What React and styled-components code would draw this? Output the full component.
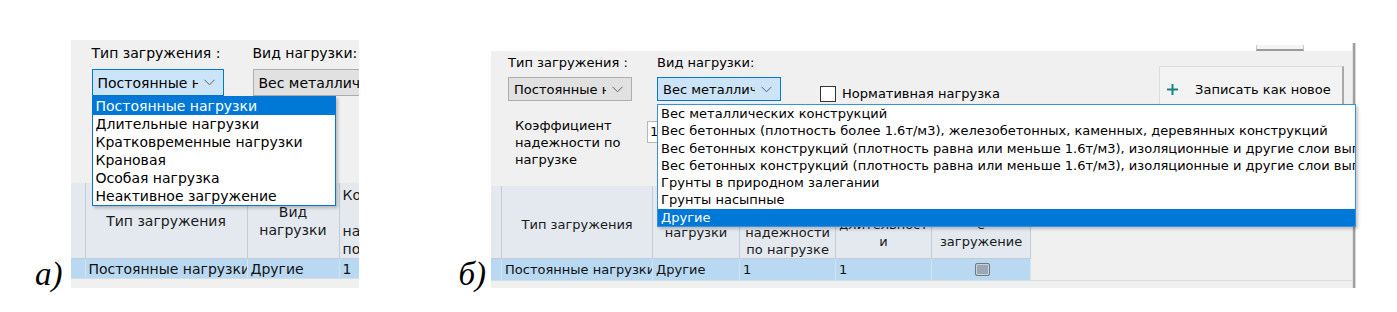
import React from "react";
import styled, { createGlobalStyle } from "styled-components";

const GlobalStyle = createGlobalStyle`
  html, body { margin: 0; padding: 0; background: #fff; }
  body { font-family: "DejaVu Sans", "Noto Sans", sans-serif; color: #000; }
  * { box-sizing: border-box; }
`;

const Page = styled.div`
  width: 1397px;
  height: 312px;
  display: flex;
  align-items: flex-end;
  padding: 0 0 24px 35px;
  gap: 100px;
  overflow: hidden;
  background: #fff;
`;

const Figure = styled.div`
  display: flex;
  align-items: flex-end;
  gap: ${(p) => p.$gap}px;
`;

const Caption = styled.div`
  font-family: "Liberation Serif", "Times New Roman", serif;
  font-style: italic;
  font-size: 33px;
  line-height: 1;
  margin-bottom: -3px;
`;

const Window = styled.div`
  position: relative;
  width: ${(p) => p.$w}px;
  height: ${(p) => p.$h}px;
  background: #f0f0f0;
  overflow: hidden;
  display: flex;
  flex-direction: column;
  font-size: ${(p) => p.$fs}px;
  line-height: ${(p) => p.$lh}px;
`;

const FormRow = styled.div`
  display: flex;
  align-items: flex-start;
  padding-top: ${(p) => p.$top}px;
`;

const Field = styled.div`
  display: flex;
  flex-direction: column;
  gap: ${(p) => p.$gap}px;
  margin-left: ${(p) => p.$ml}px;
  flex-shrink: 0;
`;

const Label = styled.div`
  white-space: nowrap;
`;

const Combo = styled.div`
  width: ${(p) => p.$w}px;
  height: ${(p) => p.$h}px;
  display: flex;
  align-items: center;
  justify-content: space-between;
  padding: 0 8px 0 5px;
  background: ${(p) => (p.$focus ? "#cce4f7" : "#e1e1e1")};
  border: 1px solid ${(p) => (p.$focus ? "#0078d7" : "#adadad")};
  white-space: nowrap;
  overflow: hidden;
  span {
    overflow: hidden;
  }
`;

const Chevron = () => (
  <svg width="11" height="7" viewBox="0 0 11 7" style={{ flexShrink: 0, marginLeft: 6 }}>
    <path d="M0.5 0.8 L5.5 5.8 L10.5 0.8" fill="none" stroke="#606060" strokeWidth="1" />
  </svg>
);

const DropList = styled.div`
  position: absolute;
  z-index: 5;
  left: ${(p) => p.$left}px;
  top: ${(p) => p.$top}px;
  width: ${(p) => (p.$w ? `${p.$w}px` : "auto")};
  right: ${(p) => (p.$w ? "auto" : "0")};
  font-size: ${(p) => p.$fs}px;
  background: #fff;
  border: 1px solid ${(p) => p.$border};
  box-shadow: 2px 2px 3px rgba(0, 0, 0, 0.22);
  overflow: hidden;
`;

const DropItem = styled.div`
  height: ${(p) => p.$h}px;
  line-height: ${(p) => p.$h}px;
  padding-left: 3px;
  white-space: nowrap;
  overflow: hidden;
  background: ${(p) => (p.$active ? "#0078d7" : "transparent")};
  color: ${(p) => (p.$active ? "#fff" : "#000")};
`;

const Table = styled.div`
  margin-top: auto;
  display: grid;
  grid-template-columns: ${(p) => p.$cols};
  grid-template-rows: ${(p) => p.$headH}px ${(p) => p.$rowH}px;
  margin-bottom: ${(p) => p.$mb}px;
  border-bottom: 1px solid #d6dde5;
`;

const HeadCell = styled.div`
  background: #e3e9ef;
  border-right: 1px solid #c3ccd6;
  border-bottom: 1px solid #c3ccd6;
  display: flex;
  flex-direction: column;
  justify-content: center;
  align-items: ${(p) => (p.$left ? "flex-start" : "center")};
  padding-left: ${(p) => (p.$left ? 3 : 0)}px;
  padding-top: ${(p) => p.$pt || 0}px;
  text-align: center;
  white-space: nowrap;
  overflow: hidden;
  color: #1a1a1a;
`;

const RowCell = styled.div`
  background: #b9d9f3;
  border-right: 1px solid #d4e3f0;
  padding-left: 3px;
  display: flex;
  align-items: center;
  justify-content: ${(p) => (p.$center ? "center" : "flex-start")};
  white-space: nowrap;
  overflow: hidden;
  color: #111;
`;

const MiniCheck = styled.div`
  width: 15px;
  height: 13px;
  border: 1px solid #6f7780;
  border-radius: 2px;
  background: #9aa7b4;
  box-shadow: inset 0 0 0 1px #c9d0d8;
`;

/* --- panel б --- */

const OuterB = styled.div`
  position: relative;
  display: flex;
  height: 245px;
  width: 865px;
`;

const ColumnB = styled.div`
  display: flex;
  flex-direction: column;
  width: 861px;
`;

const TopStrip = styled.div`
  height: 8px;
  background: #fff;
  display: flex;
  align-items: flex-end;
`;

const ButtonStub = styled.div`
  margin-left: 765px;
  width: 48px;
  height: 6px;
  border: 1px solid #c8c8c8;
  border-top: none;
  border-bottom: 2px solid #9a9a9a;
  background: #f4f4f4;
`;

const EdgeLine = styled.div`
  width: 4px;
  background: linear-gradient(90deg, #e2e2e2 0, #e2e2e2 1px, #9e9e9e 1px, #9e9e9e 3px, #d8d8d8 3px);
`;

const CheckRow = styled.div`
  display: flex;
  align-items: center;
  gap: 6px;
  margin-left: ${(p) => p.$ml}px;
  margin-top: ${(p) => p.$mt}px;
  white-space: nowrap;
`;

const CheckBox = styled.div`
  width: 16px;
  height: 16px;
  background: #fff;
  border: 1px solid #333;
`;

const ActionButton = styled.div`
  margin-left: auto;
  margin-right: 8px;
  margin-top: 12px;
  width: 185px;
  height: 44px;
  background: #f3f3f3;
  border: 1px solid #dcdcdc;
  border-right: 2px solid #a8a8a8;
  display: flex;
  align-items: flex-start;
  padding: 14px 0 0 7px;
  gap: 17px;
  white-space: nowrap;
`;

const CoefRow = styled.div`
  display: flex;
  align-items: flex-start;
  padding-left: 24px;
  margin-top: 7px;
`;

const CoefLabel = styled.div`
  width: 132px;
`;

const NumInput = styled.div`
  margin-top: 4px;
  width: 40px;
  height: 22px;
  background: #fff;
  border: 1px solid #b8b8b8;
  padding-left: 2px;
  line-height: 20px;
`;

const PlusIcon = () => (
  <svg width="11" height="11" viewBox="0 0 11 11" style={{ marginTop: 3 }}>
    <path d="M5.5 0 V11 M0 5.5 H11" stroke="#16877f" strokeWidth="2" />
  </svg>
);

const loadTypes = [
  "Постоянные нагрузки",
  "Длительные нагрузки",
  "Кратковременные нагрузки",
  "Крановая",
  "Особая нагрузка",
  "Неактивное загружение",
];

const weightTypes = [
  "Вес металлических конструкций",
  "Вес бетонных (плотность более 1.6т/м3), железобетонных, каменных, деревянных конструкций",
  "Вес бетонных конструкций (плотность равна или меньше 1.6т/м3), изоляционные и другие слои выполняемые в заводских условиях",
  "Вес бетонных конструкций (плотность равна или меньше 1.6т/м3), изоляционные и другие слои выполняемые на строительной площадке",
  "Грунты в природном залегании",
  "Грунты насыпные",
  "Другие",
];

function Lines({ items }) {
  return items.map((t, i) => <div key={i}>{t || "\u00a0"}</div>);
}

function PanelA() {
  return (
    <Window $w={288} $h={248} $fs={14} $lh={18}>
      <FormRow $top={4}>
        <Field $gap={7} $ml={21}>
          <Label>Тип загружения :</Label>
          <Combo $w={132} $h={27} $focus>
            <span>Постоянные н</span>
            <Chevron />
          </Combo>
        </Field>
        <Field $gap={7} $ml={29}>
          <Label>Вид нагрузки:</Label>
          <Combo $w={140} $h={27}>
            <span>Вес металлических</span>
          </Combo>
        </Field>
      </FormRow>
      <DropList $left={21} $top={56} $w={244} $fs={14} $border="#0a74d0">
        {loadTypes.map((t, i) => (
          <DropItem key={t} $h={18} $active={i === 0}>
            {t}
          </DropItem>
        ))}
      </DropList>
      <Table $cols="15px 162px 92px 40px" $headH={76} $rowH={19} $mb={9}>
        <HeadCell />
        <HeadCell>Тип загружения</HeadCell>
        <HeadCell $pt={-4}>
          <Lines items={["Вид", "нагрузки"]} />
        </HeadCell>
        <HeadCell $left $pt={2}>
          <Lines items={["Коэффициен", "", "надежности", "по нагрузке"]} />
        </HeadCell>
        <RowCell />
        <RowCell>Постоянные нагрузки</RowCell>
        <RowCell>Другие</RowCell>
        <RowCell>1</RowCell>
      </Table>
    </Window>
  );
}

function PanelB() {
  return (
    <OuterB>
      <ColumnB>
        <TopStrip>
          <ButtonStub />
        </TopStrip>
        <Window $w={861} $h={237} $fs={13} $lh={17}>
          <FormRow $top={3}>
            <Field $gap={6} $ml={17}>
              <Label>Тип загружения :</Label>
              <Combo $w={124} $h={24}>
                <span>Постоянные н</span>
                <Chevron />
              </Combo>
            </Field>
            <Field $gap={6} $ml={25}>
              <Label>Вид нагрузки:</Label>
              <Combo $w={124} $h={24} $focus>
                <span>Вес металлич</span>
                <Chevron />
              </Combo>
            </Field>
            <CheckRow $ml={39} $mt={31}>
              <CheckBox />
              <span>Нормативная нагрузка</span>
            </CheckRow>
            <ActionButton>
              <PlusIcon />
              <span>Записать как новое</span>
            </ActionButton>
          </FormRow>
          <CoefRow>
            <CoefLabel>
              <Lines items={["Коэффициент", "надежности по", "нагрузке"]} />
            </CoefLabel>
            <NumInput>1,</NumInput>
          </CoefRow>
          <Table $cols="11px 151px 87px 96px 96px 99px" $headH={73} $rowH={21} $mb={7}>
            <HeadCell />
            <HeadCell $pt={4}>Тип загружения</HeadCell>
            <HeadCell $pt={4}>
              <Lines items={["", "Вид", "нагрузки", ""]} />
            </HeadCell>
            <HeadCell $pt={4}>
              <Lines items={["Коэффициен", "т", "надежности", "по нагрузке"]} />
            </HeadCell>
            <HeadCell $pt={4}>
              <Lines items={["Коэффициент", "длительност", "и"]} />
            </HeadCell>
            <HeadCell $pt={4}>
              <Lines items={["Неактивно", "е", "загружение"]} />
            </HeadCell>
            <RowCell />
            <RowCell>Постоянные нагрузки</RowCell>
            <RowCell>Другие</RowCell>
            <RowCell>1</RowCell>
            <RowCell>1</RowCell>
            <RowCell $center>
              <MiniCheck />
            </RowCell>
          </Table>
        </Window>
      </ColumnB>
      <EdgeLine />
      <DropList $left={166} $top={61} $fs={13} $border="#3b8fdc">
        {weightTypes.map((t, i) => (
          <DropItem key={i} $h={17.3} $active={i === weightTypes.length - 1}>
            {t}
          </DropItem>
        ))}
      </DropList>
    </OuterB>
  );
}

export default function App() {
  return (
    <>
      <GlobalStyle />
      <Page>
        <Figure $gap={8}>
          <Caption>а)</Caption>
          <PanelA />
        </Figure>
        <Figure $gap={5}>
          <Caption>б)</Caption>
          <PanelB />
        </Figure>
      </Page>
    </>
  );
}
